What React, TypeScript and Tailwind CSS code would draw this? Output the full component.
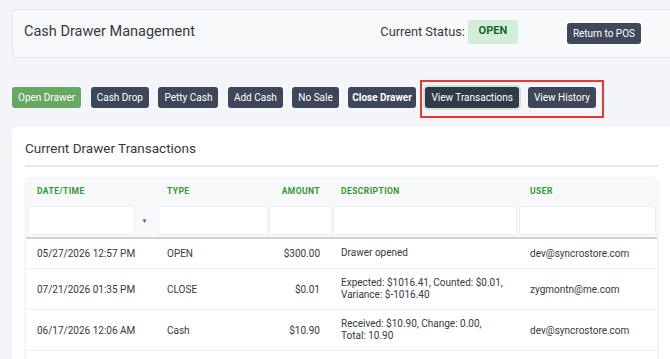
import { ReactNode } from "react";

const actions = [
  { label: "Open Drawer", cls: "bg-[#67a862]" },
  { label: "Cash Drop", cls: "bg-[#3e4759]" },
  { label: "Petty Cash", cls: "bg-[#3e4759]" },
  { label: "Add Cash", cls: "bg-[#3e4759]" },
  { label: "No Sale", cls: "bg-[#3e4759]" },
  { label: "Close Drawer", cls: "bg-[#3e4759] font-bold !px-[4px]" },
];

const rows = [
  {
    date: "05/27/2026 12:57 PM",
    type: "OPEN",
    amount: "$300.00",
    desc: ["Drawer opened"],
    user: "dev@syncrostore.com",
    h: "h-[30px]",
  },
  {
    date: "07/21/2026 01:35 PM",
    type: "CLOSE",
    amount: "$0.01",
    desc: ["Expected: $1016.41, Counted: $0.01,", "Variance: $-1016.40"],
    user: "zygmontn@me.com",
    h: "h-[41px]",
  },
  {
    date: "06/17/2026 12:06 AM",
    type: "Cash",
    amount: "$10.90",
    desc: ["Received: $10.90, Change: 0.00,", "Total: 10.90"],
    user: "dev@syncrostore.com",
    h: "h-[41px]",
  },
];

const cols = "grid grid-cols-[132px_111px_63px_187px_138px]";

function Btn({ children, className }: { children: ReactNode; className?: string }) {
  return (
    <button className={`h-[21px] px-[6px] rounded-[3px] text-white text-[10px] leading-none ${className}`}>
      {children}
    </button>
  );
}

export default function App() {
  return (
    <div className="w-[670px] h-[359px] overflow-hidden bg-[#f4f5f8] font-['Roboto',sans-serif] text-[#333a42]">
      <div className="w-[720px] pl-[12px] pt-[9px]">
        <header className="h-[49px] flex items-center pl-[11px] pr-[78px] bg-[#f8f9fb] border border-[#e5e7ea] rounded-[4px]">
          <h1 className="mb-[4px] text-[14.5px] text-[#343a40]">Cash Drawer Management</h1>
          <div className="ml-auto mb-[4px] flex items-center gap-[3px]">
            <span className="text-[12.75px] text-[#343a40]">Current Status:</span>
            <span className="h-[24px] w-[50px] flex items-center justify-center rounded-[3px] bg-[#d3eed8] text-[#17632a] font-bold text-[11px]">
              OPEN
            </span>
          </div>
          <Btn className="ml-[49px] h-[20px] px-[5.5px] bg-[#3f495b] text-[9.75px]">Return to POS</Btn>
        </header>

        <div className="mt-[29px] flex items-center gap-[9.5px]">
          {actions.map((a) => (
            <Btn key={a.label} className={a.cls}>
              {a.label}
            </Btn>
          ))}
          <div className="relative flex items-center gap-[9px]">
            <span className="absolute -left-[5px] -right-[8px] -top-[7px] -bottom-[10px] border-2 border-[#e8382f]" />
            <Btn className="bg-[#2f3a4b] ring-[2px] ring-[#cfe5cc]">View Transactions</Btn>
            <Btn className="bg-[#3e4759]">View History</Btn>
          </div>
        </div>

        <section className="mt-[19px] bg-white rounded-tl-[4px] pl-[13px] pt-[13px] pb-[20px]">
          <h2 className="text-[13.5px] leading-[16px] text-[#343a40]">Current Drawer Transactions</h2>
          <div className="mt-[9px] w-[633px] border-b-2 border-[#e3e5e8]" />

          <div className="mt-[12px] ml-[1px] w-[631px] rounded-t-[4px] shadow-[0_0_4px_rgba(0,0,0,0.12)] overflow-hidden">
            <div className={`${cols} h-[25px] items-center bg-[#f7f8fa] text-[8.5px] font-bold tracking-[0.05em] text-[#2f9a2f]`}>
              <div className="pl-[11px]">DATE/TIME</div>
              <div className="pl-[9px]">TYPE</div>
              <div className="pr-[12px] text-right">AMOUNT</div>
              <div className="pl-[9px]">DESCRIPTION</div>
              <div className="pl-[11px]">USER</div>
            </div>
            <div className={`${cols} h-[35px] bg-[#f7f8fa] border-b-2 border-[#cfd1d4] py-[2px]`}>
              <div className="flex items-stretch">
                <div className="ml-[2px] w-[107px] bg-white border border-[#eceef0] rounded-[2px]" />
                <div className="flex-1 flex items-center justify-center pr-[4px] text-[6px] text-[#555]">▼</div>
              </div>
              <div className="bg-white border border-[#eceef0] rounded-[2px] mr-[1px]" />
              <div className="bg-white border border-[#eceef0] rounded-[2px]" />
              <div className="bg-white border border-[#eceef0] rounded-[2px] ml-[1px] mr-[2px]" />
              <div className="bg-white border border-[#eceef0] rounded-[2px] mr-[1px]" />
            </div>
            {rows.map((r, i) => (
              <div
                key={i}
                className={`${cols} ${r.h} items-center bg-white border-b border-[#eef0f2] text-[10px] text-[#333a42]`}
              >
                <div className="pl-[11px]">{r.date}</div>
                <div className="pl-[9px]">{r.type}</div>
                <div className="pr-[12px] text-right">{r.amount}</div>
                <div className="pl-[9px] leading-[12.5px]">
                  {r.desc.map((d) => (
                    <div key={d}>{d}</div>
                  ))}
                </div>
                <div className="pl-[11px]">{r.user}</div>
              </div>
            ))}
            <div className="h-[30px] bg-white" />
          </div>
        </section>
      </div>
    </div>
  );
}
